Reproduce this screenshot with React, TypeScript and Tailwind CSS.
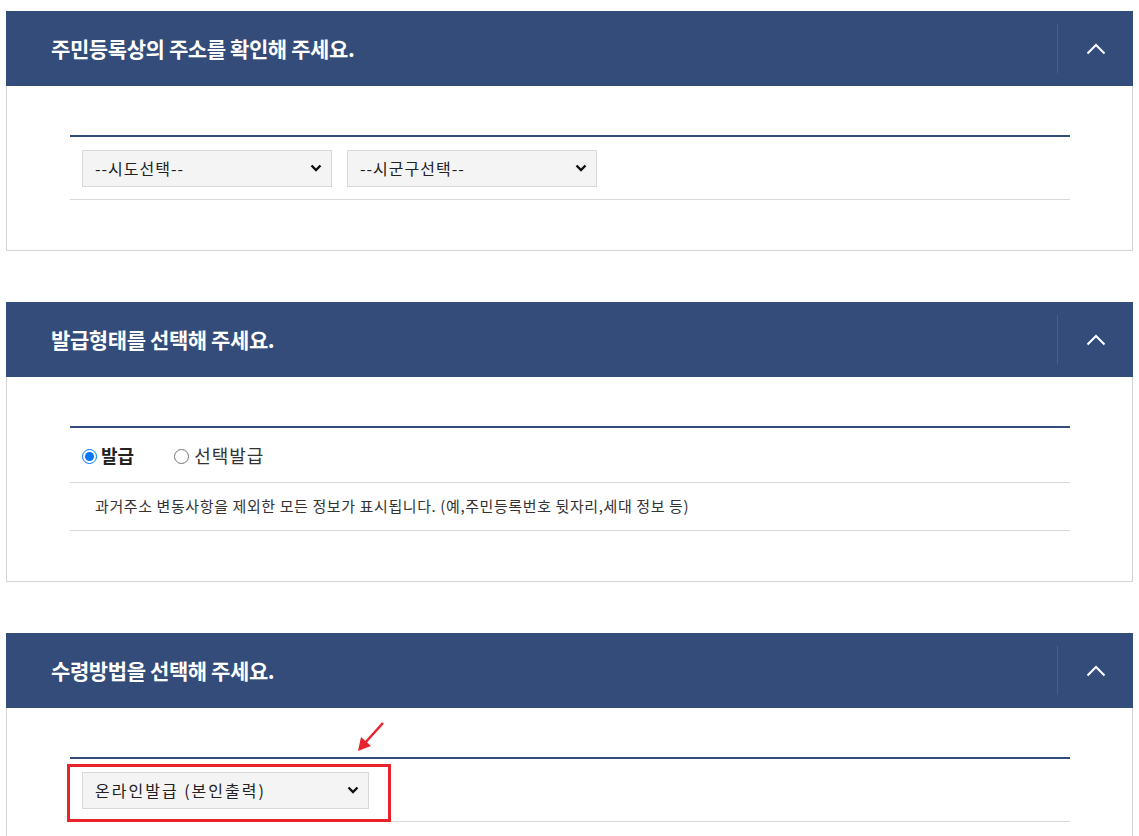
import React from 'react';

const NAVY = 'bg-[#344c79]';

function Header({ title }: { title: string }) {
  return (
    <div className={`${NAVY} h-[75px] flex items-center`}>
      <h2 className="flex-1 pl-[45px] text-white text-[21px] font-bold tracking-[-0.4px]">{title}</h2>
      <div className="w-px h-[49px] bg-[#4b6089]" />
      <button className="w-[75px] h-full flex items-center justify-center">
        <svg width="20" height="12" viewBox="0 0 20 12" fill="none">
          <path d="M1.5 10.5 L10 2 L18.5 10.5" stroke="white" strokeWidth="2" />
        </svg>
      </button>
    </div>
  );
}

function FakeSelect({ label, width, tracking }: { label: string; width: string; tracking: string }) {
  return (
    <div className={`relative ${width} h-[37px]`}>
      <select
        className={`appearance-none w-full h-full bg-[#f4f4f4] border border-[#d8d8d8] pl-[12px] text-[16px] text-[#222] outline-none ${tracking}`}
      >
        <option>{label}</option>
      </select>
      <svg
        className="absolute right-[10px] top-1/2 -translate-y-1/2 pointer-events-none"
        width="12"
        height="8"
        viewBox="0 0 12 8"
        fill="none"
      >
        <path d="M1.5 1.5 L6 6 L10.5 1.5" stroke="#111" strokeWidth="2.4" />
      </svg>
    </div>
  );
}

function Card({ title, children }: { title: string; children: React.ReactNode }) {
  return (
    <section>
      <Header title={title} />
      <div className="relative border-x border-b border-[#d5d5d5] pl-[63px] pr-[62px] pt-[49px] pb-[50px]">
        <div className="border-t-2 border-[#344c79]">{children}</div>
      </div>
    </section>
  );
}

export default function App() {
  return (
    <div
      className="bg-white min-h-screen px-[6px] pt-[11px] pb-[40px] flex flex-col gap-[51px] text-[#222]"
      style={{ fontFamily: '"Noto Sans CJK KR", "Noto Sans", sans-serif' }}
    >
      <Card title="주민등록상의 주소를 확인해 주세요.">
        <div className="h-[63px] border-b border-[#d9d9d9] flex items-center gap-[15px] pl-[12px]">
          <FakeSelect label="--시도선택--" width="w-[250px]" tracking="tracking-[1px]" />
          <FakeSelect label="--시군구선택--" width="w-[250px]" tracking="tracking-[1px]" />
        </div>
      </Card>

      <Card title="발급형태를 선택해 주세요.">
        <div className="h-[55px] border-b border-[#d9d9d9] flex items-center pl-[12px]">
          <label className="flex items-center gap-[4px]">
            <input type="radio" name="kind" defaultChecked className="w-[15px] h-[15px] m-0 mt-[3px]" />
            <span className="text-[18px] font-bold text-[#222]">발급</span>
          </label>
          <label className="flex items-center gap-[5px] ml-[40px]">
            <input type="radio" name="kind" className="w-[15px] h-[15px] m-0 mt-[3px]" />
            <span className="text-[18px] text-[#333] tracking-[1px]">선택발급</span>
          </label>
        </div>
        <div className="h-[48px] border-b border-[#d9d9d9] flex items-center pl-[25px] text-[15px] text-[#333] tracking-[0.6px]">
          과거주소 변동사항을 제외한 모든 정보가 표시됩니다. (예,주민등록번호 뒷자리,세대 정보 등)
        </div>
      </Card>

      <Card title="수령방법을 선택해 주세요.">
        <div className="h-[63px] border-b border-[#d9d9d9] flex items-center pl-[12px]">
          <FakeSelect label="온라인발급 (본인출력)" width="w-[287px]" tracking="tracking-[2px]" />
        </div>
        {/* annotation overlay */}
        <div className="absolute left-[60px] top-[56px] w-[324px] h-[58px] border-[3px] border-[#e8232b] pointer-events-none" />
        <svg
          className="absolute left-[345px] top-[12px] pointer-events-none"
          width="36"
          height="36"
          viewBox="0 0 36 36"
          fill="none"
        >
          <path d="M31 3 L12 24" stroke="#e8232b" strokeWidth="2.5" />
          <path d="M6 31 L9 17 L19 26 Z" fill="#e8232b" />
        </svg>
      </Card>
    </div>
  );
}
